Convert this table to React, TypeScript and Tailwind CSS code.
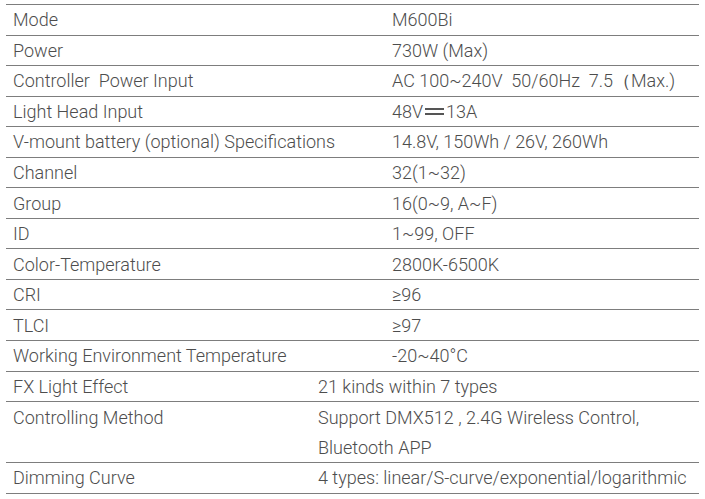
import React from "react";

type Row = { label: React.ReactNode; value: React.ReactNode; narrow?: boolean; tall?: boolean };

const Dc = () => (
  <span className="inline-block align-middle w-[19px] h-[7px] border-t-[2px] border-b-[2px] border-[#555] mx-[2px] relative top-[-2px]"></span>
);

const rows: Row[] = [
  { label: "Mode", value: "M600Bi" },
  { label: "Power", value: "730W (Max)" },
  { label: <>Controller&nbsp; Power Input</>, value: <>AC 100~240V&nbsp; 50/60Hz&nbsp; 7.5（Max.)</> },
  { label: "Light Head Input", value: <>48V<Dc />13A</> },
  { label: "V-mount battery (optional) Specifications", value: "14.8V, 150Wh / 26V, 260Wh" },
  { label: "Channel", value: "32(1~32)" },
  { label: "Group", value: "16(0~9, A~F)" },
  { label: "ID", value: "1~99, OFF" },
  { label: "Color-Temperature", value: "2800K-6500K" },
  { label: "CRI", value: "≥96" },
  { label: "TLCI", value: "≥97" },
  { label: "Working Environment Temperature", value: "-20~40°C" },
  { label: "FX Light Effect", value: "21 kinds within 7 types", narrow: true },
  {
    label: "Controlling Method",
    value: (
      <>
        <div className="h-[30.56px] flex items-center">Support DMX512 , 2.4G Wireless Control,</div>
        <div className="h-[30.56px] flex items-center">Bluetooth APP</div>
      </>
    ),
    narrow: true,
    tall: true,
  },
  { label: "Dimming Curve", value: "4 types: linear/S-curve/exponential/logarithmic", narrow: true },
];

export default function App() {
  return (
    <div className="w-[705px] h-[499px] bg-white pt-[4px] overflow-hidden" style={{ fontFamily: "Roboto, 'Noto Sans', sans-serif" }}>
      <div className="ml-[6px] w-[693px] border-t border-[#7d7d7d] text-[18px] font-light text-[#4d4d4d]">
        {rows.map((r, i) => (
          <div
            key={i}
            className={
              "flex border-b border-[#7d7d7d] " + (r.tall ? "h-[61.12px] items-start" : "h-[30.56px] items-center")
            }
          >
            <div
              className={
                "pl-[7px] shrink-0 whitespace-nowrap " +
                (r.narrow ? "w-[312px]" : "w-[386px]") +
                (r.tall ? " h-[30.56px] flex items-center" : "")
              }
            >
              {r.label}
            </div>
            <div className="whitespace-nowrap">{r.value}</div>
          </div>
        ))}
      </div>
    </div>
  );
}
